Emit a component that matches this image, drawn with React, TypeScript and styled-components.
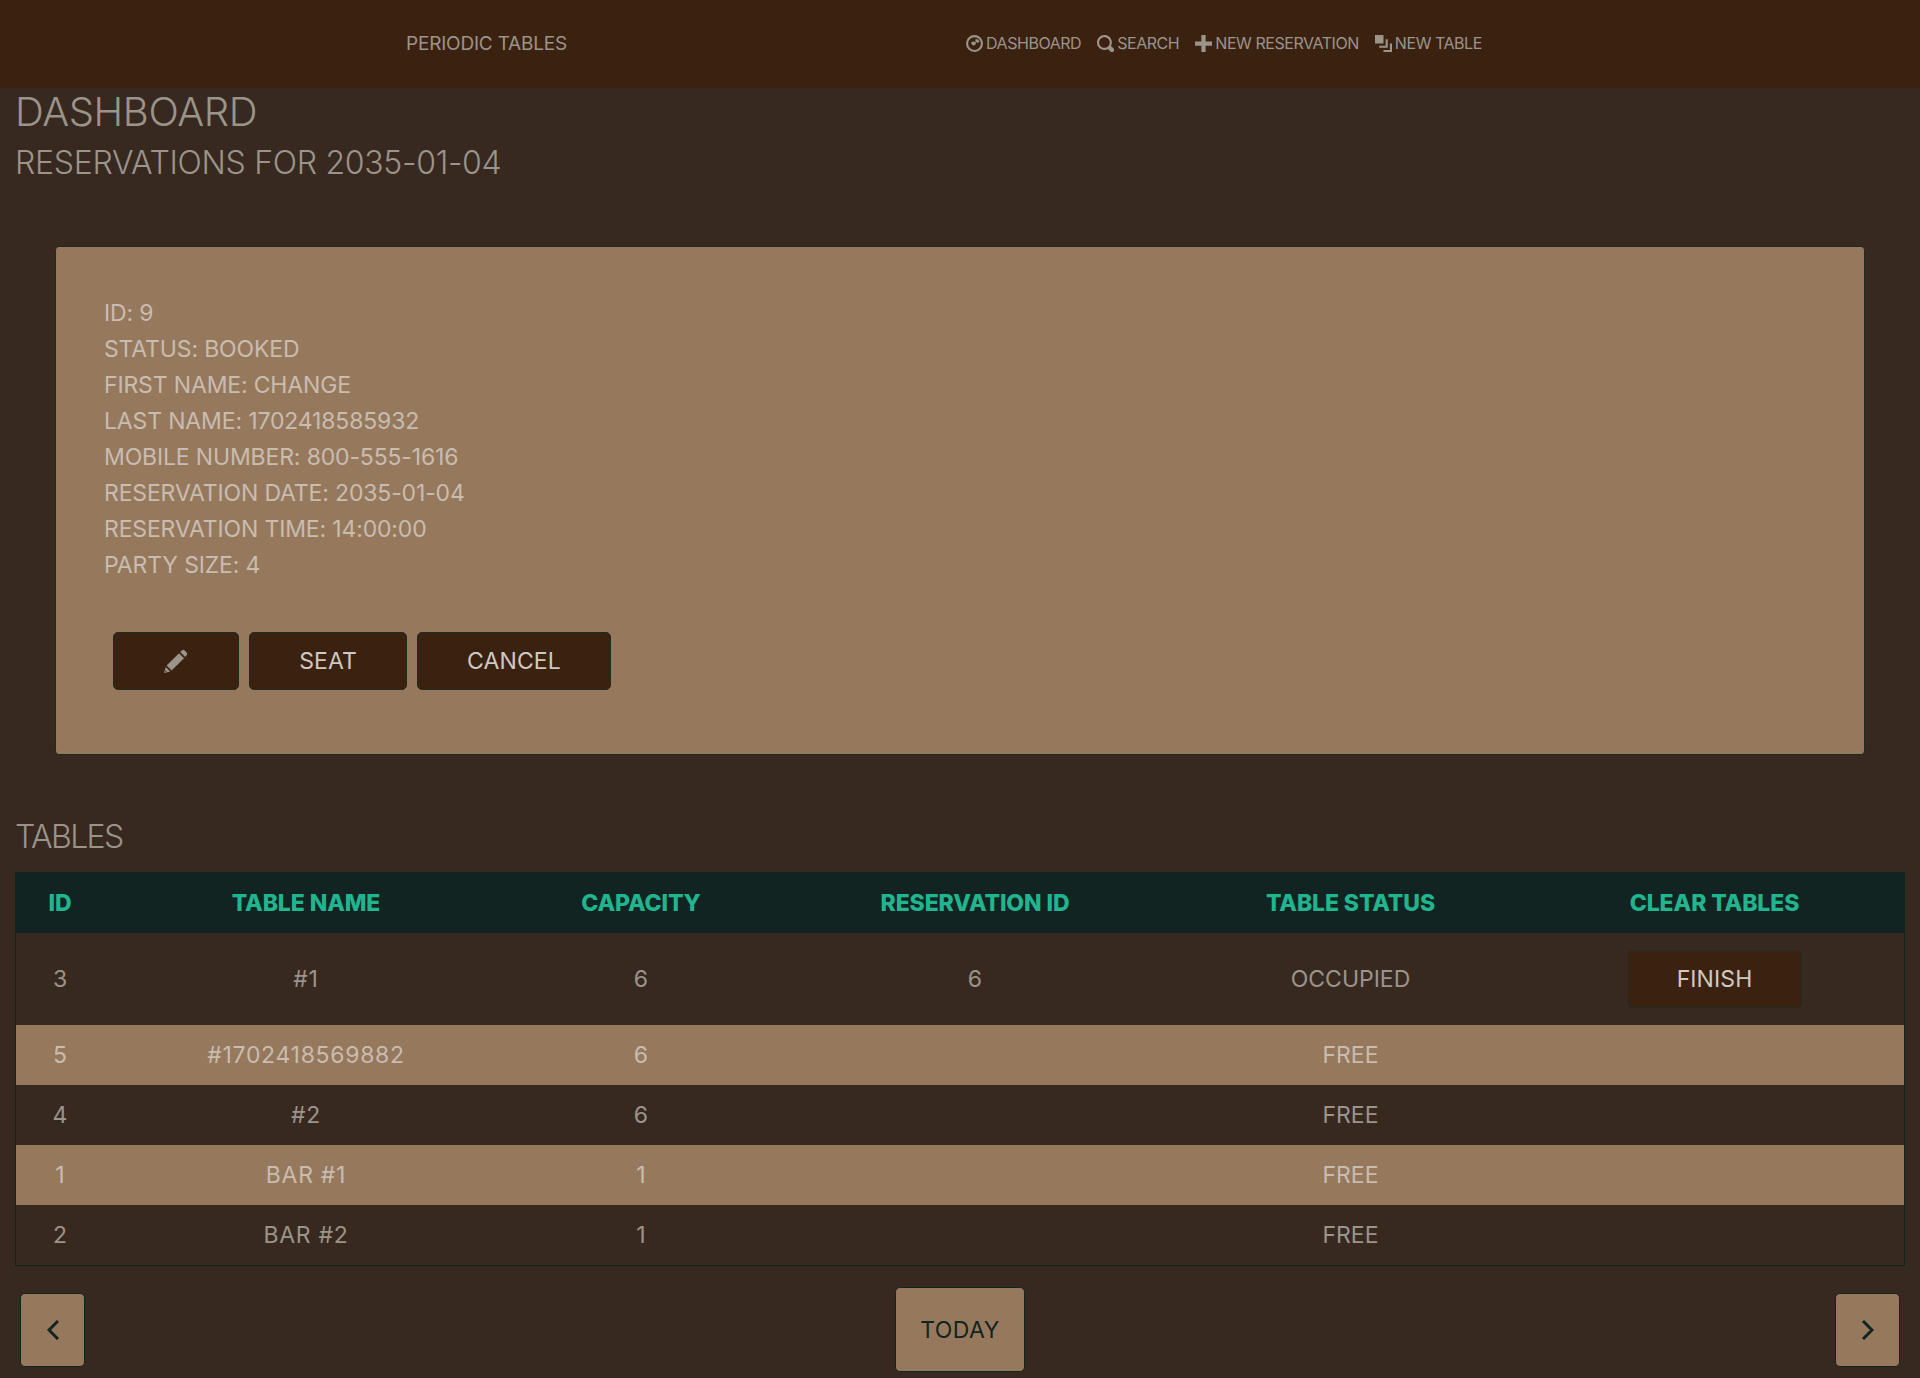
import React from 'react'
import styled, { createGlobalStyle } from 'styled-components'

const GlobalStyle = createGlobalStyle`
  body {
    margin: 0;
    background-color: #382920;
    font-family: Inter, "Noto Sans", sans-serif;
    color: #9b948b;
  }
`

const HeaderFrame = styled.header`
  display: flex;
  align-items: center;
  height: 88px;
  padding: 0 0 2px 406px;
  box-sizing: border-box;
  background-color: #3b2110;
`

const Brand = styled.a`
  width: 560px;
  font-size: 19px;
  letter-spacing: -0.2px;
  color: #9b948b;
`

const Nav = styled.nav`
  display: flex;
  align-items: center;
  gap: 16px;
`

const NavLink = styled.a`
  display: flex;
  align-items: center;
  gap: 3px;
  font-size: 16px;
  letter-spacing: -0.45px;
  color: #9b948b;

  svg {
    width: 17px;
    height: 17px;
    fill: #9b948b;
  }
`

const Main = styled.main`
  padding: 0 15px;
`

const PageTitle = styled.h1`
  margin: 0 0 8px;
  font-size: 40px;
  font-weight: 350;
  line-height: 48px;
  letter-spacing: -0.4px;
`

const SectionTitle = styled.h2<{ $tight?: boolean }>`
  margin: 0;
  font-size: 32px;
  font-weight: 350;
  line-height: 38px;
  letter-spacing: ${({ $tight }) => ($tight ? '-1.6px' : '-0.3px')};
`

const ReservationCard = styled.section`
  margin: 64px 40px 63px;
  padding: 48px 48px 64px;
  background-color: #96795d;
  border: 1px solid #1f2a22;
  border-radius: 4px;
`

const Details = styled.div`
  margin-bottom: 49px;
  font-size: 23px;
  line-height: 36px;
  letter-spacing: -0.15px;
  color: #c9bcb0;
`

const Actions = styled.div`
  display: flex;
  gap: 10px;
  margin-left: 9px;
`

const DarkButton = styled.button<{ $width: number }>`
  display: flex;
  align-items: center;
  justify-content: center;
  width: ${({ $width }) => $width}px;
  height: 58px;
  padding: 0;
  font-family: inherit;
  font-size: 23px;
  letter-spacing: 0.1px;
  color: #d0c9c2;
  background-color: #3b2110;
  border: 1px solid #1f2a22;
  border-radius: 5px;

  svg {
    width: 24px;
    height: 24px;
    fill: #9b948b;
  }
`

const TablesTable = styled.table`
  width: 1890px;
  margin-top: 16px;
  table-layout: fixed;
  border-collapse: separate;
  border-spacing: 0;
  border: 1px solid #122421;
  text-align: center;
`

const HeadCell = styled.th<{ $width: number }>`
  width: ${({ $width }) => $width}px;
  height: 60px;
  padding: 0;
  font-size: 23px;
  font-weight: 800;
  letter-spacing: -0.1px;
  color: #20b58f;
  background-color: #122421;
`

const Row = styled.tr<{ $light: boolean }>`
  height: 60px;
  background-color: ${({ $light }) => ($light ? '#96795d' : '#382920')};
  color: ${({ $light }) => ($light ? '#c9bcb0' : '#9b948b')};
`

const Cell = styled.td`
  padding: 0;
  font-size: 23px;
`

const NameCell = styled(Cell)`
  letter-spacing: 0.7px;
`

const FinishCell = styled(Cell)`
  padding: 17px 0;

  button {
    margin: 0 auto;
  }
`

const Pager = styled.div`
  display: flex;
  align-items: center;
  justify-content: space-between;
  height: 85px;
  margin: 21px 5px 6px;
`

const PagerButton = styled.button<{ $wide?: boolean }>`
  display: flex;
  align-items: center;
  justify-content: center;
  width: ${({ $wide }) => ($wide ? 130 : 65)}px;
  height: ${({ $wide }) => ($wide ? 85 : 74)}px;
  padding: 0;
  font-family: inherit;
  font-size: 23px;
  letter-spacing: 0.4px;
  color: #122421;
  background-color: #96795d;
  border: 1px solid #122421;
  border-radius: 5px;

  svg {
    width: 12px;
    height: 20px;
    fill: none;
    stroke: #122421;
    stroke-width: 3;
  }
`

const columns = [
  { title: 'ID', width: 88 },
  { title: 'TABLE NAME', width: 404 },
  { title: 'CAPACITY', width: 266 },
  { title: 'RESERVATION ID', width: 402 },
  { title: 'TABLE STATUS', width: 349 },
  { title: 'CLEAR TABLES', width: 379 },
]

const tables = [
  { id: 5, name: '#1702418569882', capacity: 6 },
  { id: 4, name: '#2', capacity: 6 },
  { id: 1, name: 'BAR #1', capacity: 1 },
  { id: 2, name: 'BAR #2', capacity: 1 },
]

const details = [
  'ID: 9',
  'STATUS: BOOKED',
  'FIRST NAME: CHANGE',
  'LAST NAME: 1702418585932',
  'MOBILE NUMBER: 800-555-1616',
  'RESERVATION DATE: 2035-01-04',
  'RESERVATION TIME: 14:00:00',
  'PARTY SIZE: 4',
]

function Menu() {
  return (
    <HeaderFrame>
      <Brand>PERIODIC TABLES</Brand>
      <Nav>
        <NavLink>
          <svg viewBox="0 0 8 8">
            <path d="M4 0a4 4 0 1 0 0 8 4 4 0 0 0 0-8zm0 1a3 3 0 1 1 0 6 3 3 0 0 1 0-6z" />
            <path d="M2.6 3.3a1.05 1.05 0 1 0 1.9 1l.2-.9-.9-.2a1 1 0 0 0-1.2.1z" />
            <path d="M4.4 2h1.1l.9 1-.8.8-1.2-.8z" />
          </svg>
          DASHBOARD
        </NavLink>
        <NavLink>
          <svg viewBox="0 0 8 8">
            <path d="M3.5 0c-1.93 0-3.5 1.57-3.5 3.5s1.57 3.5 3.5 3.5c.59 0 1.17-.14 1.66-.41a1 1 0 0 0 .13.13l1 1a1.02 1.02 0 1 0 1.44-1.44l-1-1a1 1 0 0 0-.16-.13c.27-.49.44-1.06.44-1.66 0-1.93-1.57-3.5-3.5-3.5zm0 1c1.39 0 2.5 1.11 2.5 2.5 0 .66-.24 1.27-.66 1.72-.01.01-.02.02-.03.03a1 1 0 0 0-.13.13c-.44.4-1.04.63-1.69.63-1.39 0-2.5-1.11-2.5-2.5s1.11-2.5 2.5-2.5z" />
          </svg>
          SEARCH
        </NavLink>
        <NavLink>
          <svg viewBox="0 0 8 8">
            <path d="M3 0v3h-3v2h3v3h2v-3h3v-2h-3v-3h-2z" />
          </svg>
          NEW RESERVATION
        </NavLink>
        <NavLink>
          <svg viewBox="0 0 8 8">
            <path d="M0 0v4h4v-4h-4zm5 2v3h-3v1h4v-4h-1zm2 2v3h-3v1h4v-4h-1z" />
          </svg>
          NEW TABLE
        </NavLink>
      </Nav>
    </HeaderFrame>
  )
}

export default function App() {
  return (
    <>
      <GlobalStyle />
      <Menu />
      <Main>
        <PageTitle>DASHBOARD</PageTitle>
        <SectionTitle>RESERVATIONS FOR 2035-01-04</SectionTitle>

        <ReservationCard>
          <Details>
            {details.map((line) => (
              <div key={line}>{line}</div>
            ))}
          </Details>
          <Actions>
            <DarkButton $width={126}>
              <svg viewBox="0 0 24 24">
                <path d="M15 4.2l5 5-12.4 12.4-5-5z" />
                <path d="M16.2 3l1.6-1.6c.8-.8 2-.8 2.8 0l2 2c.8.8.8 2 0 2.8L21.2 8z" />
                <path d="M1.8 18l4.4 4.4L0 24zM1.6 21.2l1.2 1.2-1.6.4z" fillRule="evenodd" />
              </svg>
            </DarkButton>
            <DarkButton $width={158}>SEAT</DarkButton>
            <DarkButton $width={194}>CANCEL</DarkButton>
          </Actions>
        </ReservationCard>

        <SectionTitle $tight>TABLES</SectionTitle>
        <TablesTable>
          <thead>
            <tr>
              {columns.map((column) => (
                <HeadCell key={column.title} $width={column.width}>
                  {column.title}
                </HeadCell>
              ))}
            </tr>
          </thead>
          <tbody>
            <Row $light={false}>
              <Cell>3</Cell>
              <NameCell>#1</NameCell>
              <Cell>6</Cell>
              <Cell>6</Cell>
              <Cell>OCCUPIED</Cell>
              <FinishCell>
                <DarkButton $width={174}>FINISH</DarkButton>
              </FinishCell>
            </Row>
            {tables.map((table, index) => (
              <Row key={table.id} $light={index % 2 === 0}>
                <Cell>{table.id}</Cell>
                <NameCell>{table.name}</NameCell>
                <Cell>{table.capacity}</Cell>
                <Cell />
                <Cell>FREE</Cell>
                <Cell />
              </Row>
            ))}
          </tbody>
        </TablesTable>

        <Pager>
          <PagerButton aria-label="previous">
            <svg viewBox="0 0 12 20">
              <polyline points="11,1 2,10 11,19" />
            </svg>
          </PagerButton>
          <PagerButton $wide>TODAY</PagerButton>
          <PagerButton aria-label="next">
            <svg viewBox="0 0 12 20">
              <polyline points="1,1 10,10 1,19" />
            </svg>
          </PagerButton>
        </Pager>
      </Main>
    </>
  )
}
